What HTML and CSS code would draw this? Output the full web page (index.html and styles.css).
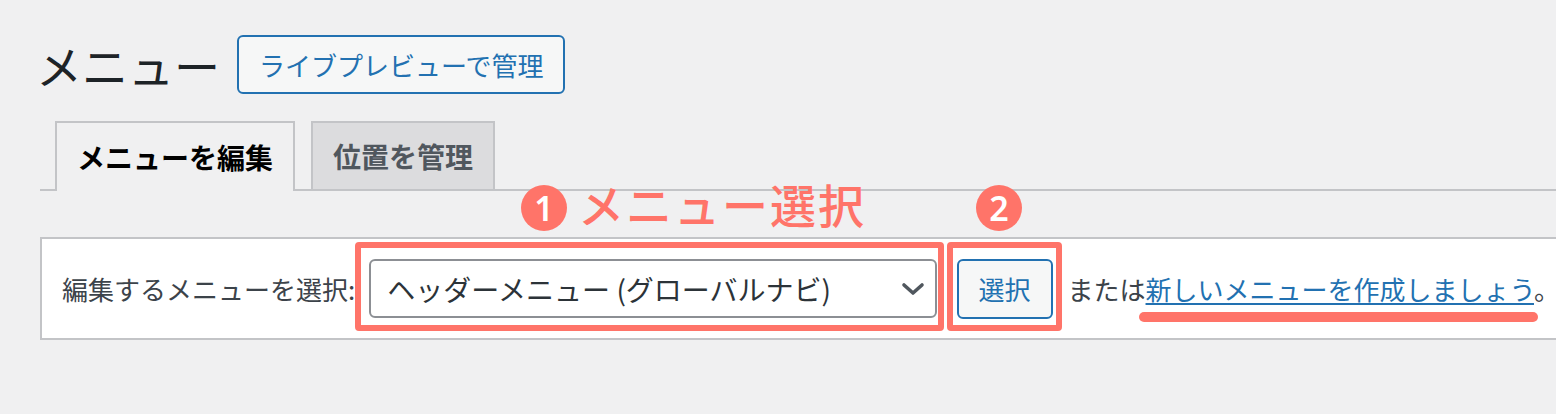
FILE: index.html
```html
<!DOCTYPE html>
<html lang="ja">
<head>
<meta charset="utf-8">
<title>メニュー</title>
<link rel="stylesheet" href="styles.css">
</head>
<body>
<div class="wrap">
  <div class="header">
    <h1 class="title">メニュー</h1>
    <a class="btn-outline">ライブプレビューで管理</a>
  </div>
  <nav class="tabs">
    <span class="tab active">メニューを編集</span>
    <span class="tab">位置を管理</span>
  </nav>
  <div class="panel">
    <span class="label">編集するメニューを選択:</span>
    <div class="select">
      <span class="select-text">ヘッダーメニュー (グローバルナビ)</span>
      <svg class="chev" width="24" height="14" viewBox="0 0 24 14"><path d="M3 3 L12 11 L21 3" fill="none" stroke="#50575e" stroke-width="3.6" stroke-linecap="round" stroke-linejoin="round"/></svg>
    </div>
    <span class="btn-small">選択</span>
    <span class="or">または<a class="link">新しいメニューを作成しましょう</a>。</span>

    <div class="note note-1"><span class="num">1</span><span class="note-text">メニュー選択</span></div>
    <div class="note note-2"><span class="num">2</span></div>
    <div class="hl hl-1"></div>
    <div class="hl hl-2"></div>
    <div class="hl-bar"></div>
  </div>
</div>
</body>
</html>
```

FILE: styles.css
```css
html, body {
  margin: 0;
  padding: 0;
}
body {
  background: #f0f0f1;
  font-family: "Noto Sans CJK JP", "Noto Sans", sans-serif;
  color: #3c434a;
  overflow: hidden;
  width: 1556px;
  height: 414px;
}
.wrap {
  margin-left: 40px;
  width: 1540px;
}
.header {
  display: flex;
  align-items: center;
  gap: 17px;
  padding-top: 35px;
}
.title {
  margin: 0 0 0 -4px;
  font-size: 46px;
  font-weight: 400;
  line-height: 58px;
  color: #1d2327;
  position: relative;
  top: -1px;
}
.btn-outline {
  box-sizing: border-box;
  height: 59px;
  display: flex;
  align-items: center;
  padding: 0 20px;
  border: 2px solid #2271b1;
  border-radius: 6px;
  background: #f6f7f7;
  color: #2271b1;
  font-size: 26px;
  line-height: 1;
}
.tabs {
  display: flex;
  gap: 16px;
  margin-top: 27px;
  padding-left: 15px;
  border-bottom: 2px solid #c3c4c7;
  align-items: flex-end;
}
.tab {
  box-sizing: border-box;
  height: 68px;
  display: flex;
  align-items: center;
  padding: 0 20px;
  border: 2px solid #c3c4c7;
  border-bottom: none;
  background: #dcdcde;
  color: #50575e;
  font-size: 28px;
  font-weight: 700;
}
.tab.active {
  background: #f0f0f1;
  color: #000;
  height: 70px;
  margin-bottom: -2px;
}
.panel {
  position: relative;
  margin-top: 46px;
  box-sizing: border-box;
  height: 103px;
  display: flex;
  align-items: center;
  padding: 0 20px;
  background: #fff;
  border: 2px solid #c3c4c7;
  border-right: none;
}
.label {
  font-size: 26px;
  color: #3c434a;
  margin-right: 14px;
  white-space: nowrap;
}
.select {
  box-sizing: border-box;
  width: 568px;
  height: 59px;
  display: flex;
  align-items: center;
  justify-content: space-between;
  padding: 0 10px 0 16px;
  border: 2px solid #8c8f94;
  border-radius: 6px;
  background: #fff;
  color: #2c3338;
  font-size: 28px;
}
.chev {
  display: block;
}
.btn-small {
  box-sizing: border-box;
  margin-left: 20px;
  height: 60px;
  width: 96px;
  display: flex;
  align-items: center;
  justify-content: center;
  border: 2px solid #2271b1;
  border-radius: 6px;
  background: #f6f7f7;
  color: #2271b1;
  font-size: 26px;
}
.or {
  margin-left: 15px;
  font-size: 26px;
  color: #3c434a;
  white-space: nowrap;
}
.link {
  color: #2271b1;
  text-decoration: underline;
  text-decoration-thickness: 2px;
  text-underline-offset: 3px;
}
.note {
  position: absolute;
  display: flex;
  align-items: center;
  gap: 11px;
  color: #ff7469;
}
.note-1 {
  left: 479px;
  top: -54px;
}
.note-2 {
  left: 934px;
  top: -54px;
}
.num {
  width: 46px;
  height: 46px;
  border-radius: 50%;
  background: #ff7469;
  color: #fff;
  font-family: "Noto Sans", sans-serif;
  font-size: 34px;
  font-weight: 600;
  display: flex;
  align-items: center;
  justify-content: center;
  line-height: 1;
}
.note-text {
  font-size: 46px;
  font-weight: 500;
  letter-spacing: 2px;
  line-height: 46px;
  position: relative;
  top: -5px;
}
.hl {
  position: absolute;
  box-sizing: border-box;
  border: 6px solid #ff7469;
  border-radius: 4px;
  top: 3px;
  height: 89px;
}
.hl-1 {
  left: 313px;
  width: 589px;
}
.hl-2 {
  left: 905px;
  width: 115px;
}
.hl-bar {
  position: absolute;
  left: 1097px;
  top: 73px;
  width: 399px;
  height: 10px;
  border-radius: 5px;
  background: #ff7469;
}
```
